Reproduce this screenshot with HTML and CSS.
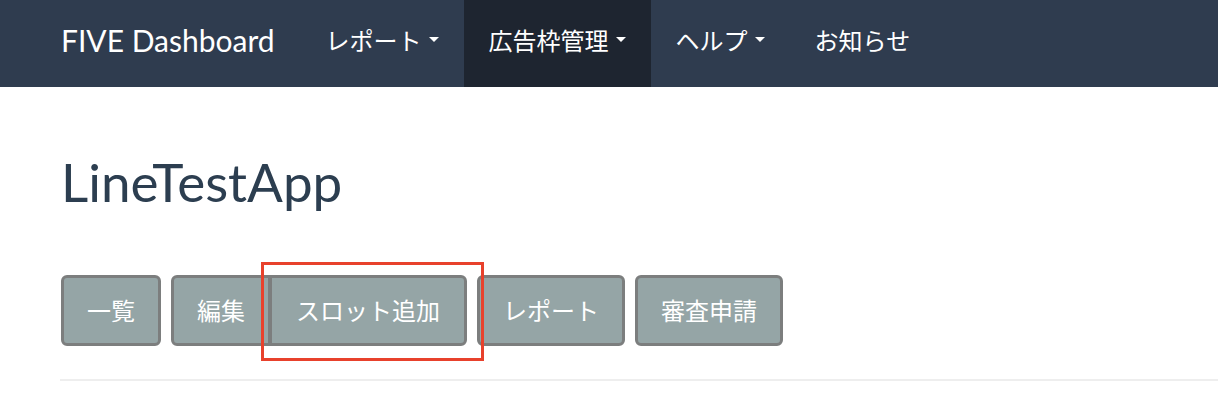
FILE: index.html
```html
<!DOCTYPE html>
<html>

<head>
  <title>LineTestApp - FIVE Dashboard</title>
  <link rel="stylesheet" href="styles.css">
</head>

<body>
  <div class="navbar">
    <a class="brand" href="#">FIVE Dashboard</a>
    <ul class="nav">
      <li><a href="#">レポート <span class="caret"></span></a></li>
      <li class="active"><a href="#">広告枠管理 <span class="caret"></span></a></li>
      <li><a href="#">ヘルプ <span class="caret"></span></a></li>
      <li><a href="#">お知らせ</a></li>
    </ul>
  </div>
  <div class="container">
    <h1 class="page-title">LineTestApp</h1>
    <div class="toolbar">
      <a class="btn" href="#">一覧</a>
      <div class="btn-group">
        <a class="btn" href="#">編集</a>
        <span class="mark"><a class="btn" href="#">スロット追加</a></span>
      </div>
      <a class="btn" href="#">レポート</a>
      <a class="btn" href="#">審査申請</a>
    </div>
    <hr>
  </div>
</body>

</html>
```

FILE: styles.css
```css
html, body {
  padding: 0;
  margin: 0;
  font-family: Lato, "Noto Sans CJK JP", sans-serif;
  color: #2c3e50;
  background: #ffffff;
  overflow: hidden;
}
a {
  text-decoration: none;
}
.navbar {
  display: flex;
  align-items: stretch;
  height: 87px;
  padding: 0 36px;
  background: #2f3c4f;
}
.navbar .brand {
  display: flex;
  align-items: center;
  padding: 0 26px 8px 25px;
  font-size: 30px;
  color: #ffffff;
}
.nav {
  display: flex;
  margin: 0;
  padding: 0;
  list-style: none;
}
.nav li a {
  display: flex;
  align-items: center;
  height: 100%;
  padding: 0 25px 8px;
  box-sizing: border-box;
  font-size: 24px;
  color: #ffffff;
}
.nav li.active a {
  background: #1e2530;
}
.caret {
  display: inline-block;
  width: 0;
  height: 0;
  margin-left: 7px;
  border-top: 5px solid #ffffff;
  border-left: 5px solid transparent;
  border-right: 5px solid transparent;
}
.container {
  padding: 66px 0 0 61px;
}
.page-title {
  margin: 0;
  font-size: 53px;
  font-weight: 400;
  line-height: 58px;
}
.toolbar {
  display: flex;
  gap: 10px;
  margin-top: 64px;
}
.btn {
  display: block;
  padding: 16px 23px;
  font-size: 24px;
  line-height: 33px;
  color: #ffffff;
  background: #95a5a6;
  border: 3px solid #7c7e7e;
  border-radius: 6px;
}
.btn-group {
  display: flex;
}
.btn-group > .btn {
  border-top-right-radius: 0;
  border-bottom-right-radius: 0;
}
.btn-group .mark {
  margin-left: -2px;
}
.btn-group .mark .btn {
  padding: 16px 24px;
  border-top-left-radius: 0;
  border-bottom-left-radius: 0;
}
.mark {
  position: relative;
}
.mark::after {
  content: "";
  position: absolute;
  left: -8px;
  top: -13px;
  right: -17px;
  bottom: -15px;
  border: 3px solid #e8412c;
  pointer-events: none;
}
hr {
  margin: 33px 0 0 -1px;
  border: 0;
  border-top: 2px solid #eeeeee;
}
```
